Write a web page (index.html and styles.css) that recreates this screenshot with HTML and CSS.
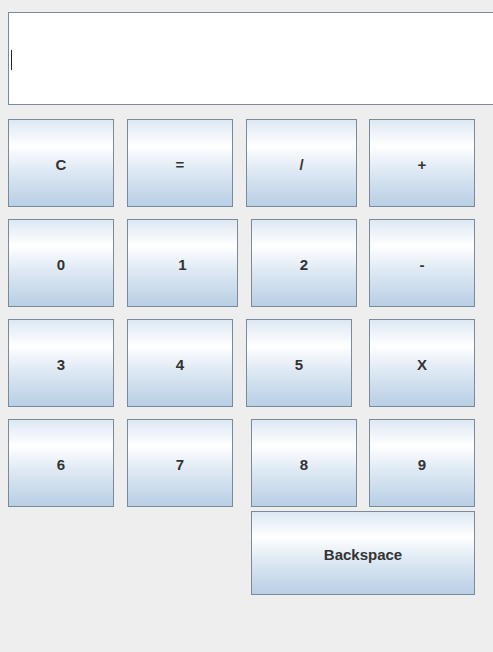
FILE: index.html
```html
<!DOCTYPE html>
<html>
<head>
<meta charset="utf-8">
<link rel="stylesheet" href="styles.css">
</head>
<body>
<div class="frame">
  <div class="display"><span class="caret"></span></div>
  <div class="keys">
    <div class="row">
      <div class="btn">C</div>
      <div class="btn ml13">=</div>
      <div class="btn ml13 wide">/</div>
      <div class="btn ml12">+</div>
    </div>
    <div class="row">
      <div class="btn">0</div>
      <div class="btn ml13 wide">1</div>
      <div class="btn ml13">2</div>
      <div class="btn ml12">-</div>
    </div>
    <div class="row">
      <div class="btn">3</div>
      <div class="btn ml13">4</div>
      <div class="btn ml13">5</div>
      <div class="btn ml17">X</div>
    </div>
    <div class="row">
      <div class="btn">6</div>
      <div class="btn ml13">7</div>
      <div class="btn ml18">8</div>
      <div class="btn ml12">9</div>
    </div>
    <div class="row last">
      <div class="btn backspace">Backspace</div>
    </div>
  </div>
</div>
</body>
</html>
```

FILE: styles.css
```css
html, body {
  margin: 0;
  padding: 0;
  background: #eeeeee;
  overflow: hidden;
}
body {
  width: 493px;
  height: 652px;
  font-family: "Liberation Sans", Arial, sans-serif;
}
.frame {
  padding: 12px 0 0 8px;
}
.display {
  box-sizing: border-box;
  width: 485px;
  height: 93px;
  background: #ffffff;
  border: 1px solid #7a8a99;
  border-right: none;
  display: flex;
  align-items: center;
  padding-left: 2px;
}
.caret {
  display: block;
  width: 1px;
  height: 20px;
  background: #222;
  margin-top: 2px;
}
.keys {
  margin-top: 14px;
  display: flex;
  flex-direction: column;
  gap: 12px;
}
.row {
  display: flex;
}
.row.last {
  margin-top: -8px;
  padding-left: 243px;
}
.btn {
  box-sizing: border-box;
  width: 106px;
  height: 88px;
  padding-top: 3px;
  border: 1px solid #7a8a99;
  background: linear-gradient(to bottom, #dde8f3 0%, #ffffff 30%, #dde8f3 60%, #b8cfe5 100%);
  color: #333333;
  font-weight: bold;
  font-size: 15px;
  display: flex;
  align-items: center;
  justify-content: center;
}
.btn.wide { width: 111px; }
.ml12 { margin-left: 12px; }
.ml13 { margin-left: 13px; }
.ml17 { margin-left: 17px; }
.ml18 { margin-left: 18px; }
.btn.backspace {
  width: 224px;
  height: 84px;
}
```
